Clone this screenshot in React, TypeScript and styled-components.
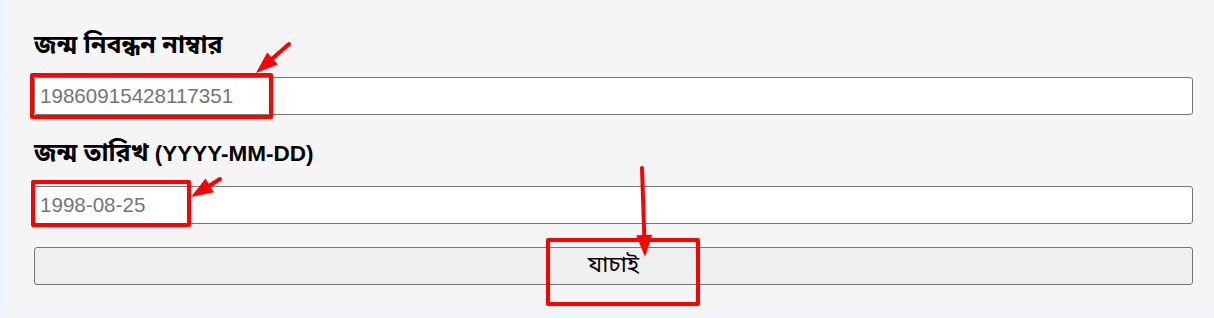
import styled, { createGlobalStyle } from "styled-components";

const GlobalStyle = createGlobalStyle`
  html, body {
    margin: 0;
    padding: 0;
    background: #eef5fc;
  }
  * {
    box-sizing: border-box;
  }
`;

const bengali = `"Noto Sans Bengali", "Lohit Bengali", "FreeSans", "Noto Sans", "Liberation Sans", sans-serif`;

const Page = styled.div`
  width: 1214px;
  height: 318px;
  padding-left: 7px;
  position: relative;
`;

const Panel = styled.form`
  height: 313px;
  background: #f5f5f5;
  padding: 30px 21px 0 27px;
  display: flex;
  flex-direction: column;
`;

const Label = styled.label<{ $gap: number }>`
  font-family: "Liberation Sans", ${bengali};
  font-size: 22.5px;
  font-weight: 700;
  line-height: 32px;
  height: 32px;
  color: #000;
  margin-bottom: ${({ $gap }) => $gap}px;
`;

const Bn = styled.span`
  font-family: ${bengali};
  font-size: 25px;
`;

const Field = styled.input`
  width: 1159px;
  height: 38px;
  border: 1px solid #767676;
  border-radius: 3px;
  background: #fff;
  padding: 0 5px;
  font-family: "Liberation Sans", Arial, sans-serif;
  font-size: 20.6px;
  color: #000;
  outline: none;

  &::placeholder {
    color: #757575;
  }
`;

const FieldGap = styled.div<{ $h: number }>`
  height: ${({ $h }) => $h}px;
`;

const Submit = styled.button`
  width: 1159px;
  height: 38px;
  border: 1px solid #767676;
  border-radius: 3px;
  background: #efefef;
  font-family: ${bengali};
  font-size: 23px;
  color: #000;
  padding: 0;
`;

const Mark = styled.div<{ $x: number; $y: number; $w: number; $h: number }>`
  position: absolute;
  left: ${({ $x }) => $x}px;
  top: ${({ $y }) => $y}px;
  width: ${({ $w }) => $w}px;
  height: ${({ $h }) => $h}px;
  border: 4.5px solid #fe0000;
  border-radius: 2px;
  pointer-events: none;
`;

const Arrows = styled.svg`
  position: absolute;
  left: 0;
  top: 0;
  pointer-events: none;
`;

type ArrowProps = { x1: number; y1: number; x2: number; y2: number };

const Arrow = ({ x1, y1, x2, y2 }: ArrowProps) => {
  const dx = x2 - x1;
  const dy = y2 - y1;
  const len = Math.hypot(dx, dy);
  const ux = dx / len;
  const uy = dy / len;
  const head = 22;
  const half = 8;
  const bx = x2 - ux * head;
  const by = y2 - uy * head;
  const pts = [
    `${x2},${y2}`,
    `${bx - uy * half},${by + ux * half}`,
    `${bx + uy * half},${by - ux * half}`,
  ].join(" ");
  return (
    <g>
      <line
        x1={x1}
        y1={y1}
        x2={bx + ux * 2}
        y2={by + uy * 2}
        stroke="#fe0000"
        strokeWidth={4}
        strokeLinecap="round"
      />
      <polygon points={pts} fill="#fe0000" />
    </g>
  );
};

export default function App() {
  return (
    <>
      <GlobalStyle />
      <Page>
        <Panel onSubmit={(e) => e.preventDefault()}>
          <Label $gap={15}>
            <Bn>জন্ম নিবন্ধন নাম্বার</Bn>
          </Label>
          <Field placeholder="19860915428117351" />
          <FieldGap $h={23} />
          <Label $gap={16}>
            <Bn>জন্ম তারিখ</Bn> (YYYY-MM-DD)
          </Label>
          <Field placeholder="1998-08-25" />
          <FieldGap $h={23} />
          <Submit type="submit">যাচাই</Submit>
        </Panel>

        <Mark $x={30} $y={73} $w={243} $h={46} />
        <Mark $x={31} $y={180} $w={160} $h={47} />
        <Mark $x={546} $y={238} $w={154} $h={68} />

        <Arrows width={1214} height={318}>
          <Arrow x1={289} y1={44} x2={256} y2={73} />
          <Arrow x1={220} y1={179} x2={191} y2={197} />
          <Arrow x1={642} y1={168} x2={645} y2={257} />
        </Arrows>
      </Page>
    </>
  );
}
